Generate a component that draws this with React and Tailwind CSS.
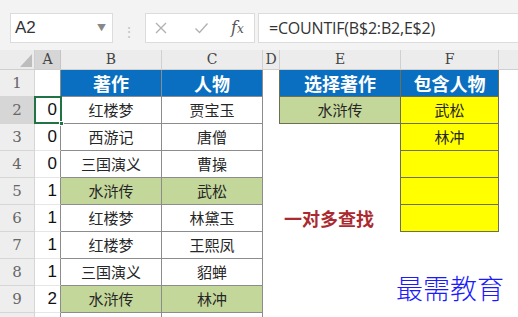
import React from 'react';

const rows = [
  { n: '1', a: '', b: '著作', c: '人物', e: '选择著作', f: '包含人物' },
  { n: '2', a: '0', b: '红楼梦', c: '贾宝玉', e: '水浒传', f: '武松' },
  { n: '3', a: '0', b: '西游记', c: '唐僧', e: '', f: '林冲' },
  { n: '4', a: '0', b: '三国演义', c: '曹操', e: '', f: '' },
  { n: '5', a: '1', b: '水浒传', c: '武松', e: '', f: '' },
  { n: '6', a: '1', b: '红楼梦', c: '林黛玉', e: '一对多查找', f: '' },
  { n: '7', a: '1', b: '红楼梦', c: '王熙凤', e: '', f: null },
  { n: '8', a: '1', b: '三国演义', c: '貂蝉', e: '', f: null },
  { n: '9', a: '2', b: '水浒传', c: '林冲', e: '', f: null },
  { n: '', a: '', b: '', c: '', e: '', f: null },
];

const cjk = { fontFamily: '"Noto Sans CJK SC", sans-serif' };
const serif = { fontFamily: '"DejaVu Serif", "Liberation Serif", serif' };

const App = () => {
  return (
    <div className="w-[518px] h-[317px] overflow-hidden bg-white relative" style={cjk}>
      {/* formula bar */}
      <div className="h-[50px] bg-[#f3f3f3] pt-[13px] flex">
        <div className="ml-[10px] w-[103px] h-[30px] bg-white border border-[#dcdcdc] flex items-center justify-between pl-[4px] pr-[6px]">
          <span className="text-[17px] text-[#333]" style={{ fontFamily: '"Liberation Sans", sans-serif' }}>A2</span>
          <span className="text-[9px] text-[#888]">▼</span>
        </div>
        <div className="w-[32px] flex items-center justify-center text-[#c4c4c4] text-[14px]">⋮</div>
        <div className="w-[110px] h-[30px] bg-white border border-[#dcdcdc] flex items-center pl-[8px]">
          <svg width="14" height="14" viewBox="0 0 14 14" className="mr-[26px]">
            <path d="M2 2 L12 12 M12 2 L2 12" stroke="#b0b0b0" strokeWidth="1.3" fill="none" />
          </svg>
          <svg width="15" height="14" viewBox="0 0 15 14" className="mr-[22px]">
            <path d="M1.5 7.5 L5.5 11.5 L13.5 2.5" stroke="#b0b0b0" strokeWidth="1.3" fill="none" />
          </svg>
          <span className="italic text-[16px] text-[#555]" style={serif}>f<span className="text-[12px]">x</span></span>
        </div>
        <div className="ml-[3px] flex-1 h-[30px] bg-white border border-[#dcdcdc] border-r-0 flex items-center pl-[10px]">
          <span className="text-[16px] text-[#333] tracking-[-0.2px]" style={{ fontFamily: '"Open Sans", sans-serif' }}>=COUNTIF(B$2:B2,E$2)</span>
        </div>
      </div>

      {/* column headers */}
      <div className="flex h-[20px] bg-[#ececec] border-b border-[#cfcfcf] text-[14px] text-[#444]" style={serif}>
        <div className="w-[35px] border-r border-[#d0d0d0] flex items-end justify-end pr-[2px] pb-[2px]">
          <svg width="12" height="13" viewBox="0 0 12 13">
            <path d="M12 0 L12 13 L0 13 Z" fill="#bdbdbd" />
          </svg>
        </div>
        <div className="w-[26px] bg-[#d6d6d6] border-r border-[#c4c4c4] flex items-center justify-center">A</div>
        <div className="w-[101px] border-r border-[#d0d0d0] flex items-center justify-center">B</div>
        <div className="w-[101px] border-r border-[#d0d0d0] flex items-center justify-center">C</div>
        <div className="w-[17px] border-r border-[#d0d0d0] flex items-center justify-center">D</div>
        <div className="w-[121px] border-r border-[#d0d0d0] flex items-center justify-center">E</div>
        <div className="w-[98px] border-r border-[#d0d0d0] flex items-center justify-center">F</div>
        <div className="flex-1" />
      </div>

      {/* rows */}
      <div className="relative">
        {rows.map((r, i) => {
          const head = i === 0;
          const green = r.n === '5' || r.n === '9';
          const tableBg = head ? 'bg-[#0a6fc0] text-white font-bold text-[18px]' : green ? 'bg-[#c4d79b] text-[#262626] text-[15px]' : 'bg-white text-[#262626] text-[15px]';
          return (
            <div key={i} className="flex h-[27px]">
              <div className={`w-[35px] border-r border-b border-[#d6d6d6] flex items-center justify-center text-[15px] text-[#666] ${r.n === '2' ? 'bg-[#d6d6d6]' : 'bg-[#eeeeee]'}`} style={serif}>
                {r.n}
              </div>
              <div className="w-[26px] border-r border-b border-r-[#8c8c8c] border-b-[#e6e6e6] flex items-center justify-end pr-[3px] text-[17px] text-[#111]" style={{ fontFamily: '"Liberation Sans", sans-serif' }}>
                {r.a}
              </div>
              <div className={`w-[101px] border-r border-b border-[#8c8c8c] flex items-center justify-center ${tableBg}`}>{r.b}</div>
              <div className={`w-[101px] border-r border-b border-[#8c8c8c] flex items-center justify-center ${tableBg}`}>{r.c}</div>
              <div className={`w-[17px] ${i < 2 ? 'border-r border-[#6e6e52]' : ''}`} />
              {head ? (
                <div className="w-[121px] border-r border-b border-[#6e6e52] bg-[#0a6fc0] text-white font-bold text-[18px] flex items-center justify-center">{r.e}</div>
              ) : i === 1 ? (
                <div className="w-[121px] border-r border-b border-[#6e6e52] bg-[#c4d79b] text-[#262626] text-[15px] flex items-center justify-center">{r.e}</div>
              ) : r.n === '6' ? (
                <div className={`w-[121px] flex items-center pl-[4px] text-[18px] font-bold text-[#ab2a30] ${r.f !== null ? 'border-r border-[#6e6e52]' : ''}`}>{r.e}</div>
              ) : (
                <div className={`w-[121px] ${r.f !== null ? 'border-r border-[#6e6e52]' : ''}`} />
              )}
              {r.f === null ? (
                <div className="w-[98px]" />
              ) : head ? (
                <div className="w-[98px] border-r border-b border-[#6e6e52] bg-[#0a6fc0] text-white font-bold text-[18px] flex items-center justify-center">{r.f}</div>
              ) : (
                <div className="w-[98px] border-r border-b border-[#6e6e52] bg-[#ffff00] text-[#262626] text-[15px] flex items-center justify-center">{r.f}</div>
              )}
              <div className="flex-1" />
            </div>
          );
        })}

        {/* selected cell A2 */}
        <div className="absolute left-[34px] top-[26px] w-[28px] h-[28px] border-2 border-[#217346]">
          <div className="absolute right-[-4px] bottom-[-4px] w-[5px] h-[5px] bg-[#217346] border border-white" />
        </div>
      </div>

      {/* watermark */}
      <div className="absolute left-[396px] top-[268px] text-[27px] font-light text-[#1a1aff]" style={cjk}>
        最需教育
      </div>
    </div>
  );
};

export default App;
